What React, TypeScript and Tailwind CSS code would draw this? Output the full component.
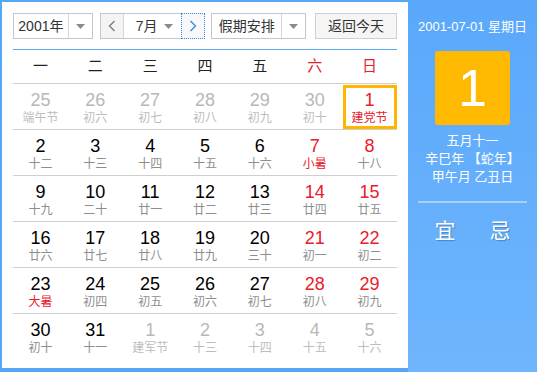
import React from "react";

type Day = { d: number; l: string; other?: boolean; red?: boolean; lunarRed?: boolean; today?: boolean };

const rows: Day[][] = [
  [
    { d: 25, l: "端午节", other: true },
    { d: 26, l: "初六", other: true },
    { d: 27, l: "初七", other: true },
    { d: 28, l: "初八", other: true },
    { d: 29, l: "初九", other: true },
    { d: 30, l: "初十", other: true },
    { d: 1, l: "建党节", red: true, lunarRed: true, today: true },
  ],
  [
    { d: 2, l: "十二" },
    { d: 3, l: "十三" },
    { d: 4, l: "十四" },
    { d: 5, l: "十五" },
    { d: 6, l: "十六" },
    { d: 7, l: "小暑", red: true, lunarRed: true },
    { d: 8, l: "十八", red: true },
  ],
  [
    { d: 9, l: "十九" },
    { d: 10, l: "二十" },
    { d: 11, l: "廿一" },
    { d: 12, l: "廿二" },
    { d: 13, l: "廿三" },
    { d: 14, l: "廿四", red: true },
    { d: 15, l: "廿五", red: true },
  ],
  [
    { d: 16, l: "廿六" },
    { d: 17, l: "廿七" },
    { d: 18, l: "廿八" },
    { d: 19, l: "廿九" },
    { d: 20, l: "三十" },
    { d: 21, l: "初一", red: true },
    { d: 22, l: "初二", red: true },
  ],
  [
    { d: 23, l: "大暑", lunarRed: true },
    { d: 24, l: "初四" },
    { d: 25, l: "初五" },
    { d: 26, l: "初六" },
    { d: 27, l: "初七" },
    { d: 28, l: "初八", red: true },
    { d: 29, l: "初九", red: true },
  ],
  [
    { d: 30, l: "初十" },
    { d: 31, l: "十一" },
    { d: 1, l: "建军节", other: true },
    { d: 2, l: "十三", other: true },
    { d: 3, l: "十四", other: true },
    { d: 4, l: "十五", other: true },
    { d: 5, l: "十六", other: true },
  ],
];

const weekdays = ["一", "二", "三", "四", "五", "六", "日"];

function Caret() {
  return (
    <svg width="9" height="5" viewBox="0 0 9 5">
      <path d="M0 0h9L4.5 5z" fill="#8a8a8a" />
    </svg>
  );
}

export default function App() {
  return (
    <div
      className="flex w-[537px] h-[372px] bg-[#58a6f6]"
      style={{ fontFamily: '"Liberation Sans", Arial, "Noto Sans CJK SC", sans-serif' }}
    >
      <div className="mt-[2px] ml-[2px] mb-[4px] w-[406px] bg-white px-[11px] pt-[11px]">
        {/* controls */}
        <div className="flex h-[26px] items-stretch text-[14px] text-[#333]">
          <div className="flex w-[80px] border border-[#c6c6c6] bg-white">
            <div className="flex flex-1 items-center justify-center border-r border-[#d6d6d6]">2001年</div>
            <div className="flex w-[23px] items-center justify-center">
              <Caret />
            </div>
          </div>
          <div className="ml-[7px] flex w-[106px] border border-[#c6c6c6]">
            <div className="flex w-[23px] items-center justify-center border-r border-[#d6d6d6] bg-[#f4f4f4]">
              <svg width="8" height="12" viewBox="0 0 8 12">
                <path d="M6.5 1L1.5 6l5 5" fill="none" stroke="#777" strokeWidth="1.3" />
              </svg>
            </div>
            <div className="flex flex-1 items-center justify-between pl-[12px] pr-[8px]">
              <span>7月</span>
              <Caret />
            </div>
            <div className="-my-px -mr-px flex w-[24px] items-center justify-center border border-dotted border-[#2f86f0] bg-[#f8f8f8]">
              <svg width="8" height="12" viewBox="0 0 8 12">
                <path d="M1.5 1l5 5-5 5" fill="none" stroke="#2f86f0" strokeWidth="1.3" />
              </svg>
            </div>
          </div>
          <div className="ml-[6px] flex w-[95px] border border-[#c6c6c6]">
            <div className="flex flex-1 items-center justify-center border-r border-[#d6d6d6]">假期安排</div>
            <div className="flex w-[23px] items-center justify-center">
              <Caret />
            </div>
          </div>
          <div className="ml-[9px] flex w-[82px] items-center justify-center border border-[#cfcfcf] bg-[#f5f5f5]">
            返回今天
          </div>
        </div>

        <div className="mt-[10px] h-px bg-[#5ba8f6]" />

        {/* header */}
        <div className="grid h-[34px] grid-cols-7 border-b border-[#cfcfcf] text-[15px]">
          {weekdays.map((w, i) => (
            <div key={w} className={`flex items-center justify-center ${i >= 5 ? "text-[#e2222c]" : "text-[#222]"}`}>
              {w}
            </div>
          ))}
        </div>

        {/* days */}
        {rows.map((row, ri) => (
          <div key={ri} className={`grid h-[46px] grid-cols-7 ${ri < 5 ? "border-b border-[#cfcfcf]" : ""}`}>
            {row.map((c, ci) => (
              <div key={ci} className="relative flex flex-col items-center pt-[6px]">
                {c.today && <div className="absolute top-[1px] bottom-0 left-[1px] right-0 border-[3px] border-[#ffb600]" />}
                <span
                  className={`text-[18px] leading-[20px] ${
                    c.other ? "text-[#b8b8b8]" : c.red ? "text-[#e8202a]" : "text-black"
                  }`}
                >
                  {c.d}
                </span>
                <span
                  className={`text-[12px] leading-[16px] ${
                    c.lunarRed ? "text-[#e8202a]" : c.other ? "text-[#bdbdbd]" : "text-[#8e8e8e]"
                  }`}
                >
                  {c.l}
                </span>
              </div>
            ))}
          </div>
        ))}
      </div>

      <div className="flex flex-1 flex-col items-center bg-gradient-to-b from-[#5aa8fb] to-[#6fb5fd] pt-[18px] text-white">
        <div className="text-[13px] leading-[18px]">2001-07-01 星期日</div>
        <div className="mt-[15px] flex h-[74px] w-[75px] items-center justify-center rounded-[3px] bg-[#ffb900] text-[52px] leading-none">
          1
        </div>
        <div className="mt-[7px] flex flex-col items-center text-[13px] leading-[18px]">
          <div>五月十一</div>
          <div>辛巳年 【蛇年】</div>
          <div>甲午月 乙丑日</div>
        </div>
        <div className="mt-[15px] h-[2px] w-[109px] bg-[#a7d0fb]" />
        <div className="mt-[15px] flex w-[76px] justify-between text-[21px] leading-[26px] [text-shadow:1px_1px_1px_rgba(0,0,0,0.25)]">
          <span>宜</span>
          <span>忌</span>
        </div>
      </div>
    </div>
  );
}
